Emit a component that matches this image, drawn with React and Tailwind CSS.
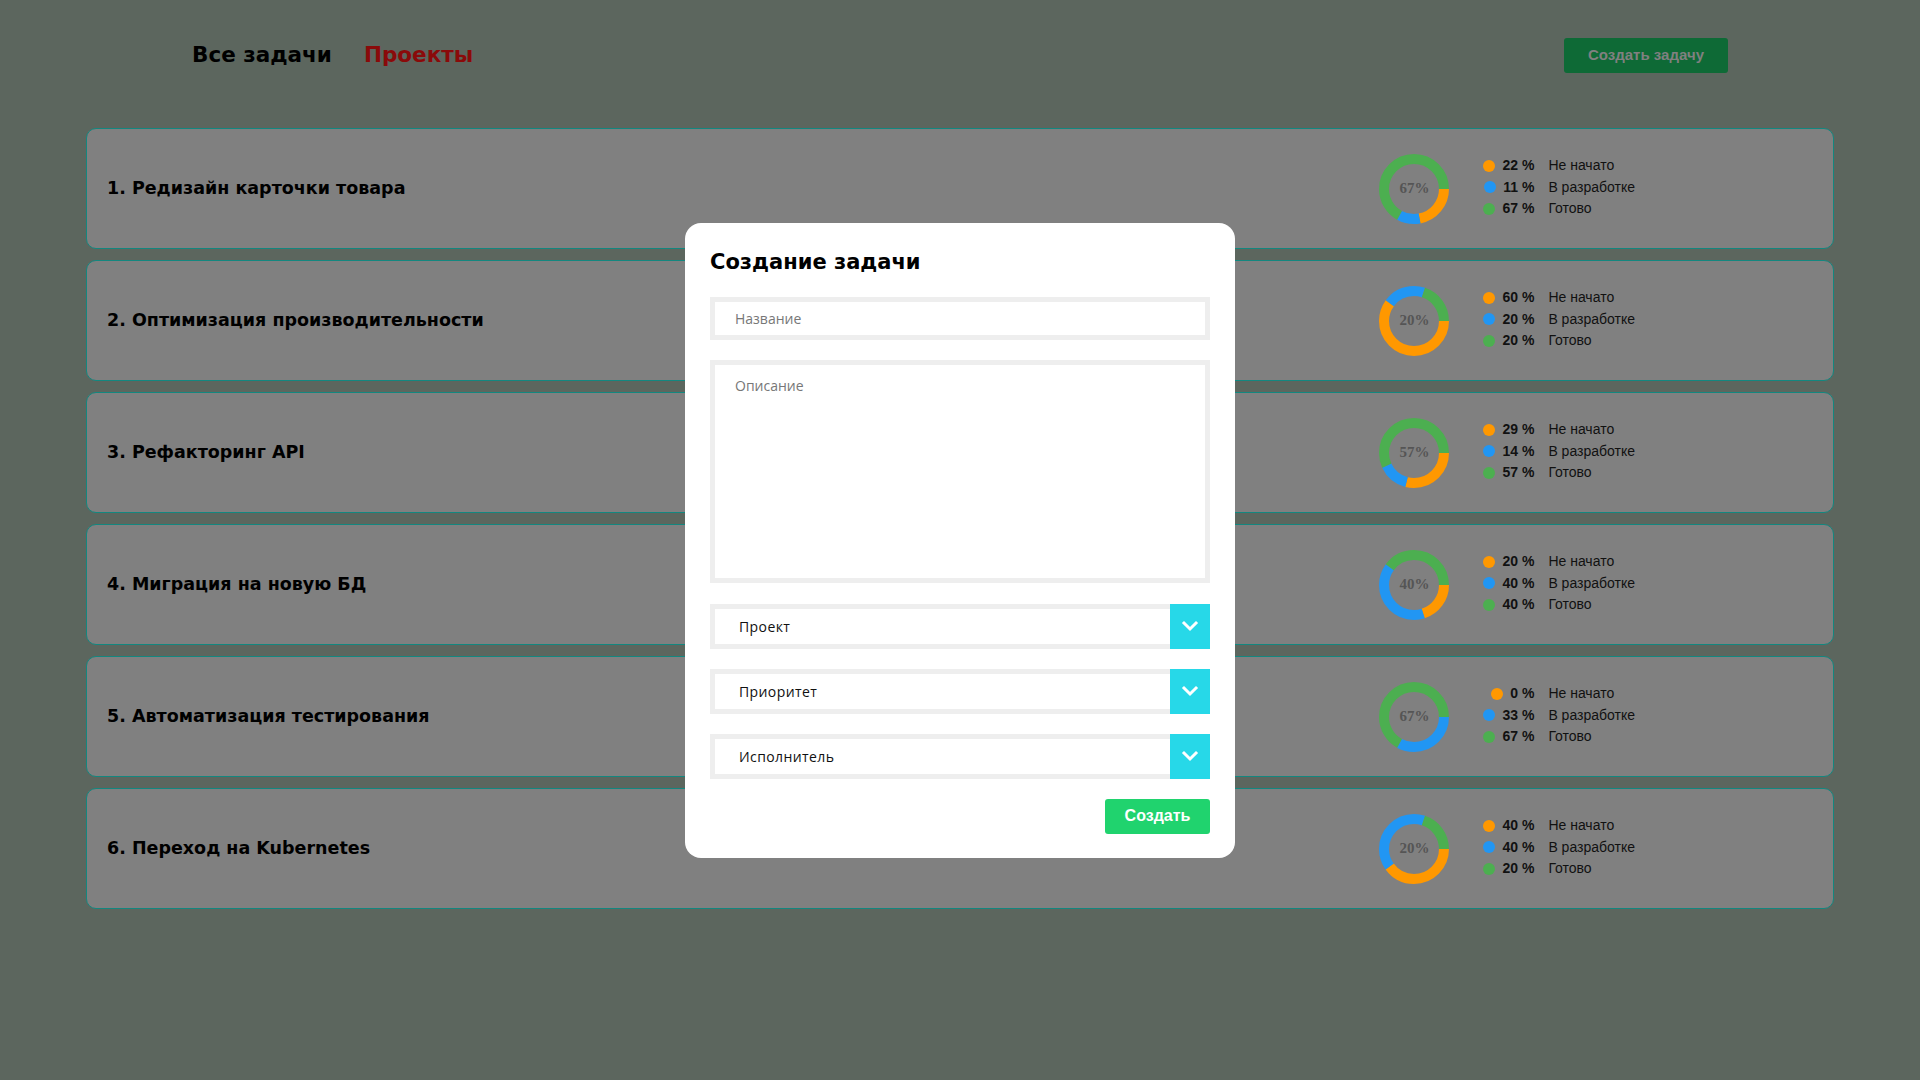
import React from "react";

const tasks = [
  { title: "1. Редизайн карточки товара", todo: 22, dev: 11, done: 67 },
  { title: "2. Оптимизация производительности", todo: 60, dev: 20, done: 20 },
  { title: "3. Рефакторинг API", todo: 29, dev: 14, done: 57 },
  { title: "4. Миграция на новую БД", todo: 20, dev: 40, done: 40 },
  { title: "5. Автоматизация тестирования", todo: 0, dev: 33, done: 67 },
  { title: "6. Переход на Kubernetes", todo: 40, dev: 40, done: 20 },
];

const head = { fontFamily: "'DejaVu Sans', Roboto, sans-serif" };
const arial = { fontFamily: "'Liberation Sans', Arial, sans-serif" };
const body = { fontFamily: "'Open Sans', 'Noto Sans', sans-serif" };

function Donut({ todo, dev, done }) {
  const r = 30;
  const c = 2 * Math.PI * r;
  const parts = [
    { v: todo, color: "#ff9800" },
    { v: dev, color: "#2196f3" },
    { v: done, color: "#4caf50" },
  ];
  let offset = 0;
  return (
    <div className="relative w-[70px] h-[70px] shrink-0">
      <svg width="70" height="70" viewBox="0 0 70 70">
        {parts.map((p, i) => {
          const len = (p.v / 100) * c;
          const el = (
            <circle
              key={i}
              cx="35"
              cy="35"
              r={r}
              fill="none"
              stroke={p.color}
              strokeWidth="10"
              strokeDasharray={`${len} ${c - len}`}
              strokeDashoffset={-offset}
            />
          );
          offset += len;
          return el;
        })}
      </svg>
      <span
        className="absolute inset-0 flex items-center justify-center text-[15px] font-bold text-[#555]"
        style={{ fontFamily: "'Liberation Serif', 'Times New Roman', serif" }}
      >
        {done}%
      </span>
    </div>
  );
}

function Legend({ todo, dev, done }) {
  const rows = [
    { v: todo, color: "bg-[#ff9800]", label: "Не начато" },
    { v: dev, color: "bg-[#2196f3]", label: "В разработке" },
    { v: done, color: "bg-[#4caf50]", label: "Готово" },
  ];
  return (
    <div className="flex flex-col text-[14px] text-[#111] mt-[-3px]" style={arial}>
      {rows.map((r, i) => (
        <div key={i} className="flex items-center h-[21.5px] whitespace-nowrap">
          <div className="w-[50px] shrink-0 flex items-center justify-end gap-[7px]">
            <span className={`w-[12px] h-[12px] shrink-0 rounded-full ${r.color}`} />
            <span className="font-bold">{r.v} %</span>
          </div>
          <span className="ml-[14px]">{r.label}</span>
        </div>
      ))}
    </div>
  );
}

function Chevron() {
  return (
    <svg width="18" height="18" viewBox="0 0 24 24" fill="none">
      <path d="M4 8l8 8 8-8" stroke="white" strokeWidth="4" strokeLinecap="square" />
    </svg>
  );
}

function Select({ label }) {
  return (
    <div className="flex h-[45px]">
      <div className="flex-1 flex items-center border-[5px] border-r-0 border-[#eeeeee] pl-[24px] text-[14px] text-[#111] tracking-[0.4px]" style={body}>
        {label}
      </div>
      <div className="w-[40px] bg-[#27d8e8] flex items-center justify-center">
        <Chevron />
      </div>
    </div>
  );
}

export default function App() {
  return (
    <div className="min-h-screen w-full bg-[#5c665e] relative">
      <header className="flex items-center justify-between h-[108px] pl-[192px] pr-[192px] pt-[2px]">
        <nav className="flex items-center gap-[32px] text-[21.5px] font-bold" style={head}>
          <span className="text-black">Все задачи</span>
          <span className="text-[#8a0a0a]">Проекты</span>
        </nav>
        <button
          className="w-[164px] h-[35px] rounded-[3px] bg-[#0e6a36] text-[#808080] text-[15px] font-bold"
          style={arial}
        >
          Создать задачу
        </button>
      </header>

      <main className="flex flex-col gap-[11px] px-[86px] pt-[20px]">
        {tasks.map((t, i) => (
          <div
            key={i}
            className="h-[121px] flex items-center justify-between rounded-[10px] border border-[#13877f] bg-[#808080] pl-[20px] pr-[198px]"
          >
            <span className="text-[17.5px] font-bold text-black" style={head}>
              {t.title}
            </span>
            <div className="flex items-center gap-[35px]">
              <Donut {...t} />
              <Legend {...t} />
            </div>
          </div>
        ))}
      </main>

      <div className="fixed inset-0 flex items-center justify-center">
        <div className="w-[550px] bg-white rounded-[16px] px-[25px] pt-[22px] pb-[24px] flex flex-col">
          <h2 className="text-[21px] font-bold text-black leading-[34px] mb-[18px]" style={head}>
            Создание задачи
          </h2>
          <input
            placeholder="Название"
            className="h-[43px] border-[5px] border-[#eeeeee] pl-[20px] text-[14px] outline-none placeholder-[#777]"
            style={body}
          />
          <textarea
            placeholder="Описание"
            className="mt-[20px] h-[223px] resize-none border-[5px] border-[#eeeeee] pl-[20px] pt-[10px] text-[14px] outline-none placeholder-[#777]"
            style={body}
          />
          <div className="mt-[21px] flex flex-col gap-[20px]">
            <Select label="Проект" />
            <Select label="Приоритет" />
            <Select label="Исполнитель" />
          </div>
          <div className="flex justify-end mt-[20px]">
            <button
              className="w-[105px] h-[35px] rounded-[3px] bg-[#20d36e] text-white text-[16px] font-bold"
              style={arial}
            >
              Создать
            </button>
          </div>
        </div>
      </div>
    </div>
  );
}
